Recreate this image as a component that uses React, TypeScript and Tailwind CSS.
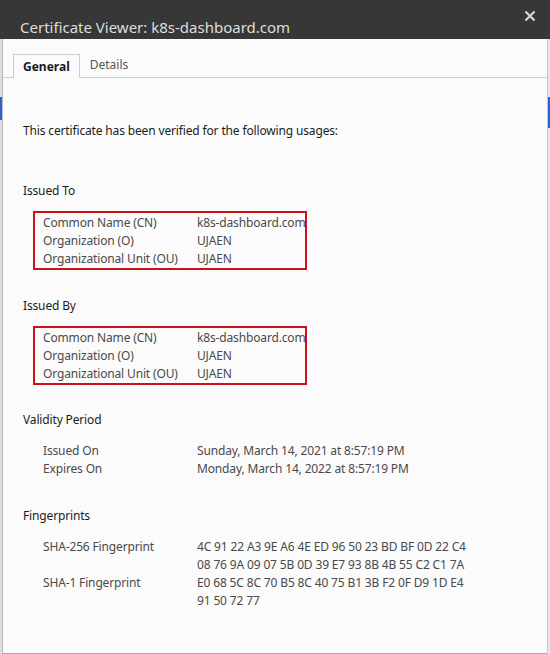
import { FC, ReactNode } from "react";

const Row: FC<{ label: string; children: ReactNode }> = ({ label, children }) => (
  <div className="flex text-[12px] leading-[18px] tracking-[-0.15px] text-[#4a4a4a] whitespace-nowrap">
    <div className="w-[154px] shrink-0">{label}</div>
    <div>{children}</div>
  </div>
);

const Heading: FC<{ title: string }> = ({ title }) => (
  <p className="text-[12px] leading-[18px] tracking-[-0.15px] text-[#1c1c1c]">{title}</p>
);

const NameBox: FC = () => (
  <div className="mt-[11px] ml-[10px] w-[274px] border-2 border-[#cc1118] pl-[8px] pt-px">
    <Row label="Common Name (CN)">k8s-dashboard.com</Row>
    <Row label="Organization (O)">UJAEN</Row>
    <Row label="Organizational Unit (OU)">UJAEN</Row>
  </div>
);

const App: FC = () => {
  return (
    <div
      className="w-[550px] h-[654px] flex flex-col bg-[#e4e4e4] overflow-hidden"
      style={{ fontFamily: '"Noto Sans", "Open Sans", sans-serif' }}
    >
      {/* title bar */}
      <div className="h-[39px] shrink-0 bg-[#373737] flex items-start justify-between pl-[20px] pr-[14px]">
        <span className="text-[15px] leading-[20px] text-[#dedede] pt-[17px]">
          Certificate Viewer: k8s-dashboard.com
        </span>
        <svg width="12" height="12" viewBox="0 0 12 12" className="mt-[10px]">
          <path d="M1.5 1.5 L10.5 10.5 M10.5 1.5 L1.5 10.5" stroke="#d6d6d6" strokeWidth="2.2" />
        </svg>
      </div>

      <div className="flex flex-1">
        {/* page behind, left */}
        <div className="w-[3px] shrink-0 border-r border-[#b8b8b8] bg-[#dedede] flex flex-col">
          <div className="h-[58px]" />
          <div className="h-[23px] bg-[#2f62cc]" />
        </div>

        {/* dialog body */}
        <div className="flex-1 bg-[#fbfbfb] border-b border-[#a9a9a9] flex flex-col">
          <div className="flex items-end h-[39px] px-[10px] border-b border-[#cdcdcd]">
            <div className="h-[24px] -mb-px px-[9px] flex items-center border border-b-0 border-[#cdcdcd] bg-[#fbfbfb] text-[12px] font-bold text-[#1a1a1a]">
              General
            </div>
            <div className="h-[24px] px-[10px] flex items-center text-[12px] text-[#555555]">Details</div>
          </div>

          <div className="pl-[20px] pt-[44px]">
            <p className="text-[12px] leading-[18px] tracking-[-0.15px] text-[#1c1c1c]">
              This certificate has been verified for the following usages:
            </p>

            <div className="mt-[42px]">
              <Heading title="Issued To" />
              <NameBox />
            </div>

            <div className="mt-[27px]">
              <Heading title="Issued By" />
              <NameBox />
            </div>

            <div className="mt-[26px]">
              <Heading title="Validity Period" />
              <div className="mt-[13px] ml-[20px]">
                <Row label="Issued On">Sunday, March 14, 2021 at 8:57:19 PM</Row>
                <Row label="Expires On">Monday, March 14, 2022 at 8:57:19 PM</Row>
              </div>
            </div>

            <div className="mt-[29px]">
              <Heading title="Fingerprints" />
              <div className="mt-[13px] ml-[20px]">
                <Row label="SHA-256 Fingerprint">
                  4C 91 22 A3 9E A6 4E ED 96 50 23 BD BF 0D 22 C4
                  <br />
                  08 76 9A 09 07 5B 0D 39 E7 93 8B 4B 55 C2 C1 7A
                </Row>
                <Row label="SHA-1 Fingerprint">
                  E0 68 5C 8C 70 B5 8C 40 75 B1 3B F2 0F D9 1D E4
                  <br />
                  91 50 72 77
                </Row>
              </div>
            </div>
          </div>
        </div>

        {/* page behind, right */}
        <div className="w-[3px] shrink-0 border-l border-[#c4c4c4] bg-[#e8e8e8] flex flex-col">
          <div className="h-[58px]" />
          <div className="h-[31px] bg-[#2f62cc]" />
        </div>
      </div>
    </div>
  );
};

export default App;
